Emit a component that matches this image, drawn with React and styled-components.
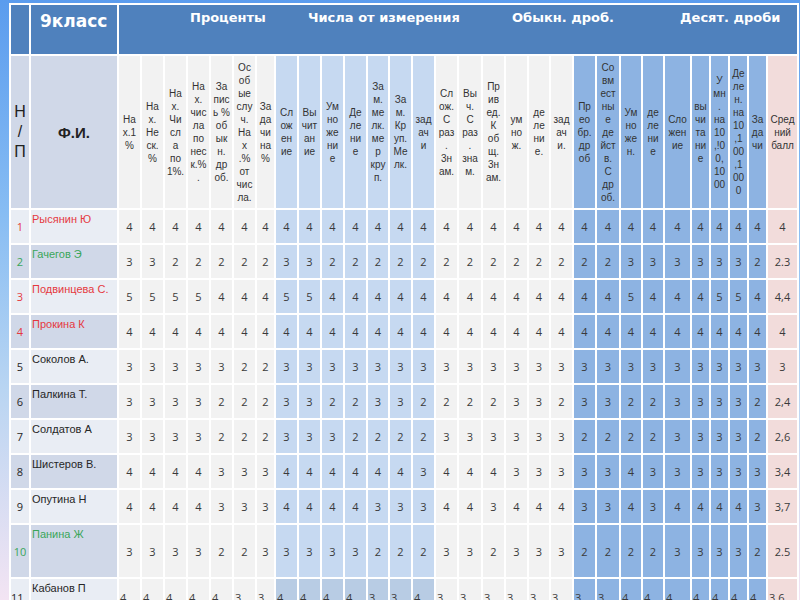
import React from 'react';
import styled, { createGlobalStyle } from 'styled-components';

const Global = createGlobalStyle`
  html, body { margin: 0; padding: 0; width: 800px; height: 600px; overflow: hidden; }
  body {
    background: linear-gradient(180deg, #5b9cee 0%, #86bcf3 35%, #b9d5f2 65%, #f3e4f3 100%);
    font-family: "Liberation Sans", Arial, sans-serif;
  }
`;

const COLORS = { p: '#f2f2f2', l: '#c6d9f1', g: '#f2f2f2', b: '#8db3e2', a: '#f2dcdb' };

const cols = [
  { w: 21, k: 'p', h: ['На', 'х.1', '%'] },
  { w: 21, k: 'p', h: ['На', 'х.', 'Не', 'ск.', '%'] },
  { w: 21, k: 'p', h: ['На', 'х.', 'Чи', 'сл', 'а', 'по', '1%.'] },
  { w: 21, k: 'p', h: ['На', 'х.', 'чис', 'ла', 'по', 'нес', 'к.%', '.'] },
  { w: 21, k: 'p', h: ['За', 'пис', 'ь %', 'об', 'ык', 'н.', 'др', 'об.'] },
  { w: 21, k: 'p', h: ['Ос', 'об', 'ые', 'слу', 'ч.', 'На', 'х', '.%', 'от', 'чис', 'ла.'] },
  { w: 17, k: 'p', h: ['За', 'да', 'чи', 'на', '%'] },
  { w: 21, k: 'l', h: ['Сл', 'ож', 'ен', 'ие'] },
  { w: 21, k: 'l', h: ['Вы', 'чит', 'ан', 'ие'] },
  { w: 21, k: 'l', h: ['Ум', 'но', 'же', 'ни', 'е'] },
  { w: 21, k: 'l', h: ['Де', 'ле', 'ни', 'е'] },
  { w: 20, k: 'l', h: ['За', 'м.', 'ме', 'лк.', 'ме', 'р', 'кру', 'п.'] },
  { w: 21, k: 'l', h: ['За', 'м.', 'Кр', 'уп.', 'Ме', 'лк.'] },
  { w: 21, k: 'l', h: ['зад', 'ач', 'и'] },
  { w: 21, k: 'g', h: ['Сл', 'ож.', 'С', 'раз', '.', '3н', 'ам.'] },
  { w: 22, k: 'g', h: ['Вы', 'ч.', 'С', 'раз', '.', 'зна', 'м.'] },
  { w: 21, k: 'g', h: ['Пр', 'ив', 'ед.', 'К', 'об', 'щ.', '3н', 'ам.'] },
  { w: 21, k: 'g', h: ['ум', 'но', 'ж.'] },
  { w: 20, k: 'g', h: ['де', 'ле', 'ни', 'е.'] },
  { w: 21, k: 'g', h: ['зад', 'ач', 'и.'] },
  { w: 21, k: 'b', h: ['Пр', 'ео', 'бр.', 'др', 'об'] },
  { w: 22, k: 'b', h: ['Со', 'вм', 'ест', 'ны', 'е', 'де', 'йст', 'в.', 'С', 'др', 'об.'] },
  { w: 20, k: 'b', h: ['Ум', 'но', 'же', 'н.'] },
  { w: 20, k: 'b', h: ['де', 'ле', 'ни', 'е'] },
  { w: 25, k: 'b', h: ['Сло', 'жен', 'ие'] },
  { w: 17, k: 'b', h: ['вы', 'чи', 'та', 'ни', 'е'] },
  { w: 17, k: 'b', h: ['У', 'мн', '.', 'на', '10', ',!0', '0,', '10', '00'] },
  { w: 17, k: 'b', h: ['Де', 'ле', 'н.', 'на', '10', ',1', '00', ',1', '00', '0'] },
  { w: 17, k: 'b', h: ['За', 'да', 'чи'] },
  { w: 29, k: 'a', h: ['Сред', 'ний', 'балл'] },
];

const RED = '#e5393f';
const GREEN = '#3aa65a';
const BLACK = '#262626';

const rows = [
  { name: 'Рысянин Ю', c: RED, v: '4444444 4444444 444444 444444444', avg: '4' },
  { name: 'Гачегов Э', c: GREEN, v: '3322222 3322222 222222 223333332', avg: '2.3' },
  { name: 'Подвинцева С.', c: RED, v: '5555444 5544444 444444 445444554', avg: '4,4' },
  { name: 'Прокина К', c: RED, v: '4444444 4444444 444444 444444444', avg: '4' },
  { name: 'Соколов А.', c: BLACK, v: '3333322 3333333 333333 333333333', avg: '3' },
  { name: 'Палкина Т.', c: BLACK, v: '3333222 3322332 222332 332233332', avg: '2,4' },
  { name: 'Солдатов А', c: BLACK, v: '3333222 3332222 333333 222233332', avg: '2,6' },
  { name: 'Шистеров В.', c: BLACK, v: '4444333 4444443 444333 334333333', avg: '3,4' },
  { name: 'Опутина Н', c: BLACK, v: '4444333 4444333 443444 334344443', avg: '3,7' },
  { name: 'Панина Ж', c: GREEN, v: '3333223 3333222 332333 222233332', avg: '2.5' },
  { name: 'Кабанов П', c: BLACK, v: '4444433 4444334 333333 334444444', avg: '3,6', shifted: true },
];

const template = ['18px', '86px', ...cols.map((c) => `${c.w}px`)].join(' ');

const Page = styled.div`
  padding: 3px 0 0 9px;
`;

const Sheet = styled.div`
  display: grid;
  grid-template-columns: ${(p) => p.$cols};
  grid-template-rows: 49px 152px repeat(9, 33px) 52px 36px;
  gap: 2px;
  padding: 2px;
  background: #ffffff;
  width: max-content;
`;

const TopCell = styled.div`
  background: #4f81bd;
  color: #fff;
`;

const ClassTitle = styled(TopCell)`
  font-family: "DejaVu Sans", Verdana, sans-serif;
  font-weight: bold;
  font-size: 17px;
  line-height: 20px;
  padding: 6px 0 0 9px;
  white-space: nowrap;
`;

const GroupBar = styled(TopCell)`
  grid-column: 3 / -1;
  display: flex;
  align-items: flex-start;
  padding: 5px 0 0 71px;
`;

const GroupLabel = styled.span`
  flex: none;
  width: ${(p) => (p.$w ? `${p.$w}px` : 'auto')};
  font-family: "DejaVu Sans", Verdana, sans-serif;
  font-weight: bold;
  font-size: 13px;
  line-height: 16px;
  white-space: nowrap;
`;

const SideHead = styled.div`
  background: #d0d8e8;
  color: #222;
  display: flex;
  align-items: center;
  justify-content: center;
  text-align: center;
`;

const NumHead = styled(SideHead)`
  flex-direction: column;
  font-size: 16px;
  line-height: 20px;
`;

const FioHead = styled(SideHead)`
  font-weight: bold;
  font-size: 15px;
`;

const ColHead = styled.div`
  background: ${(p) => COLORS[p.$k]};
  color: #333;
  display: flex;
  flex-direction: column;
  align-items: center;
  justify-content: center;
  font-size: 10px;
  line-height: 13px;
  white-space: nowrap;
  overflow: visible;
`;

const Line = styled.span`
  display: block;
`;

const RowNum = styled.div`
  background: ${(p) => (p.$odd ? '#e9edf4' : '#d0d8e8')};
  color: ${(p) => p.$c};
  display: flex;
  align-items: center;
  justify-content: ${(p) => (p.$shift ? 'flex-start' : 'center')};
  font-family: "Open Sans", "Liberation Sans", sans-serif;
  font-size: 11px;
`;

const NameCell = styled.div`
  background: ${(p) => (p.$odd ? '#e9edf4' : '#d0d8e8')};
  color: ${(p) => p.$c};
  font-size: 11px;
  line-height: 13px;
  padding: 3px 0 0 1px;
  white-space: nowrap;
`;

const ValueCell = styled.div`
  background: ${(p) => (p.$shift && p.$k === 'l' ? '#b8cce4' : COLORS[p.$k])};
  color: #3a3a3a;
  display: flex;
  align-items: center;
  justify-content: ${(p) => (p.$shift ? 'flex-start' : 'center')};
  padding-left: ${(p) => (p.$shift ? '1px' : '0')};
  font-family: "Open Sans", "Liberation Sans", sans-serif;
  font-size: 11px;
`;

export default function App() {
  return (
    <>
      <Global />
      <Page>
        <Sheet $cols={template}>
          <TopCell />
          <ClassTitle>9класс</ClassTitle>
          <GroupBar>
            <GroupLabel $w={118}>Проценты</GroupLabel>
            <GroupLabel $w={204}>Числа от измерения</GroupLabel>
            <GroupLabel $w={168}>Обыкн. дроб.</GroupLabel>
            <GroupLabel>Десят. дроби</GroupLabel>
          </GroupBar>

          <NumHead>
            <Line>Н</Line>
            <Line>/</Line>
            <Line>П</Line>
          </NumHead>
          <FioHead>Ф.И.</FioHead>
          {cols.map((c, i) => (
            <ColHead key={i} $k={c.k}>
              {c.h.map((t, j) => (
                <Line key={j}>{t}</Line>
              ))}
            </ColHead>
          ))}

          {rows.map((r, i) => {
            const vals = r.v.replace(/ /g, '').split('');
            const odd = i % 2 === 0;
            return (
              <React.Fragment key={i}>
                <RowNum $odd={odd} $c={r.c} $shift={r.shifted}>{i + 1}</RowNum>
                <NameCell $odd={odd} $c={r.c}>{r.name}</NameCell>
                {cols.map((c, j) => (
                  <ValueCell key={j} $k={c.k} $shift={r.shifted}>
                    {c.k === 'a' ? r.avg : vals[j]}
                  </ValueCell>
                ))}
              </React.Fragment>
            );
          })}
        </Sheet>
      </Page>
    </>
  );
}
